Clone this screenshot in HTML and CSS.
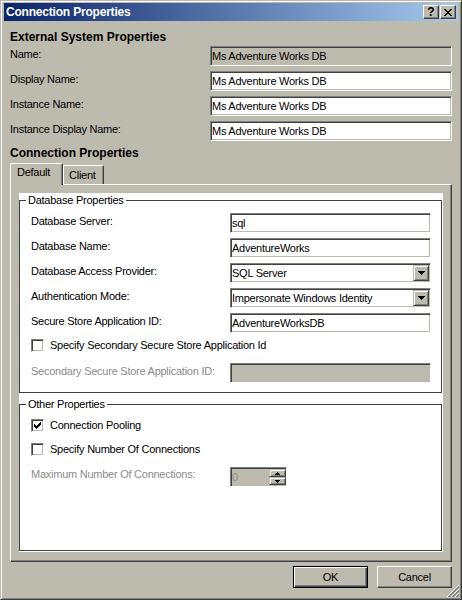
FILE: index.html
```html
<!DOCTYPE html>
<html>
<head>
<meta charset="utf-8">
<title>Connection Properties</title>
<link rel="stylesheet" href="styles.css">
</head>
<body>
<div class="window">
  <div class="titlebar">
    <span class="title">Connection Properties</span>
    <span class="tbtn help">?</span>
    <span class="tbtn close"><svg width="8" height="7" viewBox="0 0 8 7"><path d="M0 0h2v1h1v1h2v-1h1v-1h2v1h-1v1h-1v1h-1v1h1v1h1v1h1v1h-2v-1h-1v-1h-2v1h-1v1h-2v-1h1v-1h1v-1h1v-1h-1v-1h-1v-1h-1z" fill="#000"/></svg></span>
  </div>
  <div class="content">
    <div class="heading">External System Properties</div>
    <div class="rows top">
      <div class="row"><span class="lbl">Name:</span><div class="field disabled">Ms Adventure Works DB</div></div>
      <div class="row"><span class="lbl">Display Name:</span><div class="field">Ms Adventure Works DB</div></div>
      <div class="row"><span class="lbl">Instance Name:</span><div class="field">Ms Adventure Works DB</div></div>
      <div class="row"><span class="lbl">Instance Display Name:</span><div class="field">Ms Adventure Works DB</div></div>
    </div>
    <div class="heading h2">Connection Properties</div>
    <div class="tabs">
      <div class="tab active">Default</div>
      <div class="tab client">Client</div>
    </div>
    <div class="panel">
      <div class="page">
        <fieldset class="group g1">
          <legend>Database Properties</legend>
          <div class="rows">
            <div class="row"><span class="lbl">Database Server:</span><div class="field">sql</div></div>
            <div class="row"><span class="lbl">Database Name:</span><div class="field">AdventureWorks</div></div>
            <div class="row"><span class="lbl">Database Access Provider:</span><div class="select"><span class="val">SQL Server</span><span class="arrow"><svg width="7" height="4" viewBox="0 0 7 4"><path d="M0 0h7v1h-1v1h-1v1h-1v1h-1v-1h-1v-1h-1v-1h-1z" fill="#000"/></svg></span></div></div>
            <div class="row"><span class="lbl">Authentication Mode:</span><div class="select"><span class="val">Impersonate Windows Identity</span><span class="arrow"><svg width="7" height="4" viewBox="0 0 7 4"><path d="M0 0h7v1h-1v1h-1v1h-1v1h-1v-1h-1v-1h-1v-1h-1z" fill="#000"/></svg></span></div></div>
            <div class="row"><span class="lbl">Secure Store Application ID:</span><div class="field">AdventureWorksDB</div></div>
          </div>
          <div class="check-row"><span class="cb"></span><span class="ctext">Specify Secondary Secure Store Application Id</span></div>
          <div class="row sec"><span class="lbl dim">Secondary Secure Store Application ID:</span><div class="field disabled"></div></div>
        </fieldset>
        <fieldset class="group g2">
          <legend>Other Properties</legend>
          <div class="check-row first"><span class="cb"><svg width="7" height="7" viewBox="0 0 7 7"><path d="M0 2h1v1h1v1h1v-1h1v-1h1v-1h1v-1h1v3h-1v1h-1v1h-1v1h-1v1h-1v-1h-1v-1h-1z" fill="#000"/></svg></span><span class="ctext">Connection Pooling</span></div>
          <div class="check-row second"><span class="cb"></span><span class="ctext">Specify Number Of Connections</span></div>
          <div class="row spinrow"><span class="lbl dim">Maximum Number Of Connections:</span>
            <div class="spin"><span class="val">0</span>
              <span class="spinbtns">
                <span class="sbtn"><svg width="5" height="3" viewBox="0 0 5 3"><path d="M2 0h1v1h1v1h1v1h-5v-1h1v-1h1z" fill="#000"/></svg></span>
                <span class="sbtn"><svg width="5" height="3" viewBox="0 0 5 3"><path d="M0 0h5v1h-1v1h-1v1h-1v-1h-1v-1h-1z" fill="#000"/></svg></span>
              </span>
            </div>
          </div>
        </fieldset>
      </div>
    </div>
    <div class="buttons">
      <button class="btn default">OK</button>
      <button class="btn">Cancel</button>
    </div>
  </div>
  <svg class="grip" width="12" height="12" viewBox="0 0 12 12" shape-rendering="crispEdges">
    <path d="M12 0L0 12M12 4L4 12M12 8L8 12" stroke="#fff" stroke-width="1"/>
    <path d="M12 1L1 12M12 2L2 12M12 5L5 12M12 6L6 12M12 9L9 12M12 10L10 12" stroke="#808080" stroke-width="1"/>
  </svg>
</div>
</body>
</html>
```
FILE: styles.css
```css
* { box-sizing: border-box; }
html, body { margin: 0; padding: 0; }
body {
  width: 462px;
  height: 600px;
  background: #bdbaae;
  font-family: "Liberation Sans", Arial, sans-serif;
  font-size: 11px;
  letter-spacing: -0.25px;
  color: #000;
  overflow: hidden;
}
.window {
  position: relative;
  width: 462px;
  height: 600px;
  display: flex;
  flex-direction: column;
  background: #bdbaae;
  border: 1px solid;
  border-color: #bdbaae #404040 #404040 #bdbaae;
  box-shadow: inset 1px 1px #fff, inset -1px -1px #808080;
  padding: 2px 3px 3px 3px;
}
.titlebar {
  height: 18px;
  display: flex;
  align-items: center;
  background: linear-gradient(to right, #0a246a, #a6caf0);
  padding: 0 2px 0 2px;
  flex: none;
}
.title {
  flex: 1;
  color: #fff;
  font-weight: bold;
  font-size: 12px;
  letter-spacing: -0.2px;
  line-height: 14px;
}
.tbtn {
  width: 16px;
  height: 14px;
  display: flex;
  align-items: center;
  justify-content: center;
  background: #bdbaae;
  border: 1px solid;
  border-color: #fff #404040 #404040 #fff;
  box-shadow: inset -1px -1px #808080;
  font-weight: bold;
  font-size: 12px;
  line-height: 12px;
  letter-spacing: 0;
}
.tbtn.close { margin-left: 1px; }
.content {
  flex: 1;
  display: flex;
  flex-direction: column;
  padding: 9px 6px 8px 6px;
  min-height: 0;
}
.heading {
  font-weight: bold;
  font-size: 12px;
  line-height: 14px;
  letter-spacing: 0;
}
.h2 { margin-top: 5px; }
.rows {
  display: flex;
  flex-direction: column;
  gap: 5px;
}
.rows.top { margin-top: 2px; }
.row {
  display: flex;
  align-items: flex-start;
  height: 20px;
  flex: none;
}
.lbl {
  width: 200px;
  padding-top: 2px;
  line-height: 13px;
  white-space: nowrap;
  flex: none;
}
.group .lbl { width: 199px; }
.dim { color: #8c8c8c; }
.field, .select, .spin {
  height: 20px;
  border: 1px solid;
  border-color: #808080 #fff #fff #808080;
  box-shadow: inset 1px 1px #404040, inset -1px -1px #bdbaae;
  background: #fff;
  line-height: 18px;
  white-space: nowrap;
  overflow: hidden;
}
.field { flex: 1; padding: 0 1px; }
.field.disabled { background: #bdbaae; }
.select {
  flex: 1;
  display: flex;
}
.select .val { flex: 1; padding-left: 1px; }
.arrow {
  width: 16px;
  height: 16px;
  margin: 1px 1px 1px 0;
  display: flex;
  align-items: center;
  justify-content: center;
  background: #bdbaae;
  border: 1px solid;
  border-color: #bdbaae #404040 #404040 #bdbaae;
  box-shadow: inset 1px 1px #fff, inset -1px -1px #808080;
}
.arrow svg { display: block; }
.tabs {
  display: flex;
  align-items: flex-start;
  height: 21px;
  margin-top: 3px;
  flex: none;
}
.tab {
  background: #bdbaae;
  border-top: 1px solid #fff;
  border-left: 1px solid #fff;
  border-right: 1px solid #404040;
  box-shadow: inset -1px 0 #808080;
  line-height: 13px;
  white-space: nowrap;
}
.tab.active {
  width: 53px;
  height: 22px;
  padding: 2px 0 0 6px;
  border-top-left-radius: 2px;
  position: relative;
  z-index: 1;
}
.tab.client {
  width: 41px;
  height: 19px;
  margin-top: 2px;
  padding: 3px 0 0 5px;
}
.panel {
  flex: 1;
  display: flex;
  flex-direction: column;
  border: 1px solid;
  border-color: #fff #404040 #404040 #fff;
  box-shadow: inset -1px -1px #808080;
  padding: 8px 8px 9px 8px;
  min-height: 0;
}
.page {
  flex: 1;
  display: flex;
  flex-direction: column;
  background: #fff;
  padding: 0 1px 1px 0;
}
.group {
  margin: 0;
  border: 1px solid #404040;
  padding: 6px 10px 9px 11px;
  min-width: 0;
}
.group legend {
  padding: 0 2px;
  margin-left: -5px;
  line-height: 14px;
}
.g2 {
  margin-top: 4px;
  flex: 1;
  padding-top: 7px;
}
.check-row {
  display: flex;
  align-items: flex-start;
  height: 20px;
  margin-top: 5px;
}
.check-row.first { margin-top: 0; }
.check-row.second { margin-top: 4px; }
.cb {
  width: 13px;
  height: 13px;
  margin-top: 1px;
  margin-right: 6px;
  border: 1px solid;
  border-color: #808080 #fff #fff #808080;
  box-shadow: inset 1px 1px #404040, inset -1px -1px #bdbaae;
  background: #fff;
  display: flex;
  align-items: center;
  justify-content: center;
  flex: none;
}
.cb svg { display: block; }
.ctext { margin-top: 1px; line-height: 13px; white-space: nowrap; }
.row.sec { margin-top: 5px; }
.spinrow { margin-top: 5px; }
.spinrow .lbl { padding-top: 1px; }
.spin {
  width: 57px;
  display: flex;
  background: #bdbaae;
}
.spin .val { flex: 1; padding-left: 1px; color: #8c8c8c; }
.spinbtns {
  width: 17px;
  display: flex;
  flex-direction: column;
  margin: 1px 0;
}
.sbtn {
  height: 8px;
  display: flex;
  align-items: center;
  justify-content: center;
  background: #bdbaae;
  border: 1px solid;
  border-color: #bdbaae #404040 #404040 #bdbaae;
  box-shadow: inset 1px 1px #fff, inset -1px -1px #808080;
}
.sbtn svg { display: block; }
.buttons {
  display: flex;
  justify-content: flex-end;
  gap: 9px;
  margin-top: 4px;
  flex: none;
}
.btn {
  width: 75px;
  height: 22px;
  padding: 0;
  margin: 0;
  font: inherit;
  letter-spacing: inherit;
  color: #000;
  background: #bdbaae;
  border: 1px solid;
  border-color: #fff #404040 #404040 #fff;
  box-shadow: inset -1px -1px #808080;
  line-height: 18px;
}
.btn.default {
  border-color: #000;
  box-shadow: inset 1px 1px #fff, inset -1px -1px #404040, inset -2px -2px #808080;
}
.grip {
  position: absolute;
  right: 2px;
  bottom: 2px;
}
```
